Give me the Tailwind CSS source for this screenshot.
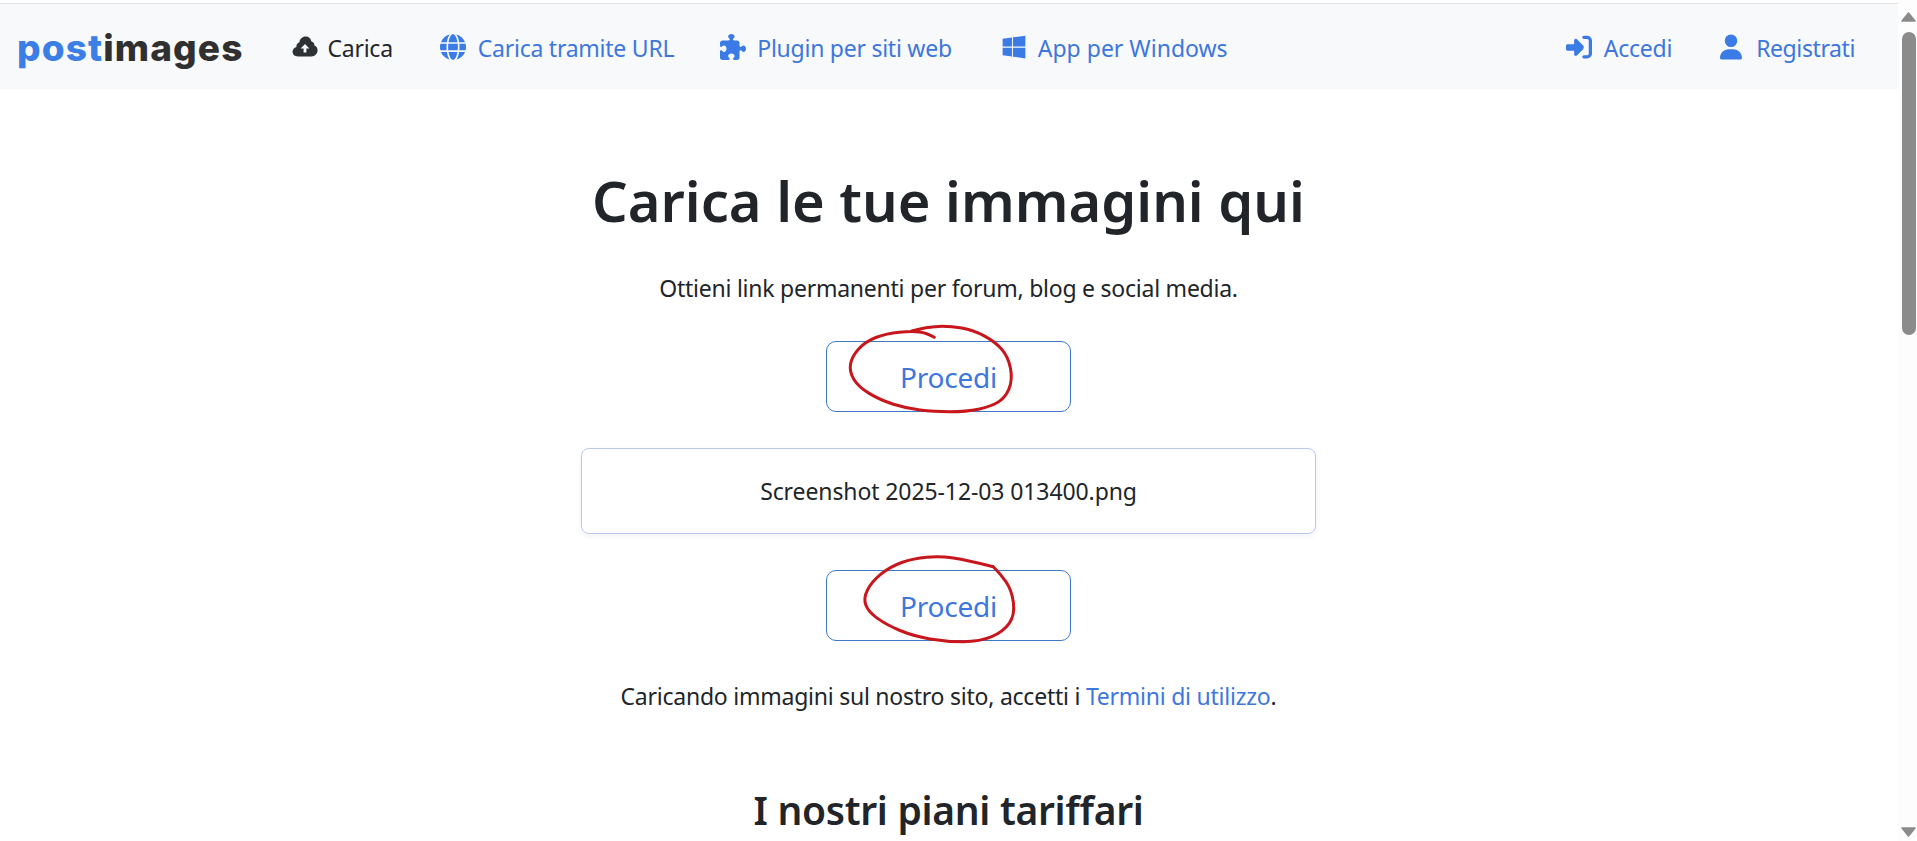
<!DOCTYPE html>
<html lang="it">
<head>
<meta charset="utf-8">
<title>postimages</title>
<script src="https://cdn.jsdelivr.net/npm/@tailwindcss/browser@4"></script>
</head>
<body class="h-[841px] overflow-hidden bg-white font-['Noto_Sans','Open_Sans',sans-serif] text-[#212529]">
<div class="relative flex h-[841px] w-[1917px]">
  <div class="flex w-[1898px] flex-col">
    <div class="h-[4px] border-b border-[#e2e3e4] bg-white"></div>
    <nav class="flex h-[85px] items-center bg-[#f8f9fa] pr-[43px] pl-[17px] text-[23px] tracking-[-0.25px] text-[#3d77dd]">
      <a class="mr-[48px] pt-[1px] font-['Inter',sans-serif] text-[37px] leading-none font-extrabold tracking-[1.1px]"><span class="text-[#3b7fe6]">post</span><span class="text-[#303030]">images</span></a>
      <div class="flex items-center">
        <a class="mr-[47px] flex items-center gap-[10px] text-[#23272b]">
          <svg class="h-[21px] w-[26px]" viewBox="0 0 24 21" preserveAspectRatio="none" fill="#2f3235"><path d="M5.500 20.500C2.500 20.500.500 18.400.500 15.800c0-2.300 1.500-4.200 3.500-4.800C3.900 8.500 5 6.800 6.800 6.200 7.200 3 9.500.500 12.500.500c2.700 0 4.900 2 5.300 4.700 1.900.600 3 2.300 2.900 4.300 1.900.800 2.900 2.500 2.900 4.800 0 3.300-2.300 6.200-5.600 6.200zM12 8l-4 4.500h2.700V16.500h2.600V12.500H16z" fill-rule="evenodd"/></svg>
          <span class="pt-[3px]">Carica</span>
        </a>
        <a class="mr-[46px] flex items-center gap-[12px]">
          <svg class="h-[26px] w-[26px]" viewBox="0 0 512 512" fill="#3b7be6"><path d="M352 256c0 22.200-1.200 43.600-3.300 64H163.300c-2.200-20.400-3.300-41.800-3.300-64s1.200-43.600 3.300-64H348.700c2.200 20.400 3.300 41.800 3.300 64zm28.800-64H503.900c5.300 20.500 8.100 41.900 8.100 64s-2.800 43.500-8.100 64H380.800c2.100-20.600 3.200-42 3.200-64s-1.100-43.400-3.200-64zm112.600-32H376.700c-10-63.900-29.800-117.400-55.300-151.600c78.300 20.700 142 77.500 171.900 151.600zm-149.100 0H167.700c6.100-36.400 15.500-68.600 27-94.700c10.500-23.600 22.200-40.700 33.500-51.500C239.400 3.200 248.700 0 256 0s16.600 3.200 27.800 13.800c11.300 10.800 23 27.900 33.500 51.500c11.600 26 20.900 58.200 27 94.700zm-209 0H18.600C48.600 85.900 112.200 29.100 190.600 8.400C165.100 42.600 145.300 96.100 135.300 160zM8.100 192H131.200c-2.100 20.600-3.200 42-3.200 64s1.100 43.400 3.200 64H8.100C2.800 299.500 0 278.100 0 256s2.800-43.500 8.100-64zM194.700 446.600c-11.600-26-20.900-58.200-27-94.600H344.300c-6.100 36.400-15.500 68.600-27 94.600c-10.500 23.600-22.200 40.700-33.500 51.500C272.600 508.800 263.300 512 256 512s-16.600-3.200-27.800-13.800c-11.300-10.800-23-27.900-33.500-51.500zM135.300 352c10 63.900 29.800 117.400 55.300 151.600C112.200 482.900 48.600 426.100 18.600 352H135.300zm358.100 0c-30 74.100-93.600 130.900-171.900 151.600c25.500-34.200 45.200-87.700 55.300-151.600H493.400z"/></svg>
          <span class="pt-[3px]">Carica tramite URL</span>
        </a>
        <a class="mr-[50px] flex items-center gap-[11px]">
          <svg class="h-[26px] w-[26px]" viewBox="0 0 512 512" fill="#3b7be6"><path d="M192 104.800c0-9.200-5.800-17.300-13.200-22.800C167.200 73.300 160 61.300 160 48c0-26.500 28.700-48 64-48s64 21.500 64 48c0 13.300-7.200 25.300-18.800 34c-7.400 5.500-13.200 13.600-13.200 22.800c0 12.800 10.400 23.200 23.200 23.200H336c26.500 0 48 21.500 48 48v56.800c0 12.800 10.400 23.200 23.200 23.200c9.200 0 17.300-5.800 22.800-13.200c8.700-11.600 20.700-18.800 34-18.800c26.500 0 48 28.700 48 64s-21.500 64-48 64c-13.300 0-25.300-7.200-34-18.800c-5.500-7.400-13.600-13.200-22.800-13.200c-12.800 0-23.200 10.400-23.200 23.200V464c0 26.500-21.500 48-48 48H279.200c-12.800 0-23.200-10.400-23.200-23.200c0-9.200 5.800-17.300 13.200-22.800c11.600-8.700 18.800-20.700 18.800-34c0-26.500-28.700-48-64-48s-64 21.500-64 48c0 13.300 7.200 25.300 18.800 34c7.400 5.500 13.200 13.600 13.200 22.800c0 12.800-10.400 23.200-23.200 23.200H48c-26.500 0-48-21.500-48-48V343.200C0 330.400 10.400 320 23.200 320c9.200 0 17.300 5.800 22.800 13.200C54.700 344.800 66.700 352 80 352c26.500 0 48-28.700 48-64s-21.500-64-48-64c-13.300 0-25.300 7.200-34 18.800C40.500 250.200 32.400 256 23.200 256C10.400 256 0 245.600 0 232.800V176c0-26.500 21.500-48 48-48H168.800c12.800 0 23.200-10.400 23.200-23.200z"/></svg>
          <span class="pt-[3px]">Plugin per siti web</span>
        </a>
        <a class="flex items-center gap-[12px]">
          <svg class="h-[26px] w-[24px]" viewBox="0 0 448 512" fill="#3b7be6"><path d="M0 93.700l183.600-25.300v177.400H0V93.700zm0 324.600l183.600 25.300V268.400H0v149.900zm203.800 28L448 480V268.400H203.800v177.900zm0-380.600v180.100H448V32L203.800 65.700z"/></svg>
          <span class="pt-[3px] tracking-[0px]">App per Windows</span>
        </a>
      </div>
      <div class="ml-auto flex items-center gap-[48px]">
        <a class="flex items-center gap-[12px]">
          <svg class="h-[26px] w-[26px]" viewBox="0 0 512 512" fill="#3b7be6"><path d="M352 96l64 0c17.700 0 32 14.300 32 32l0 256c0 17.700-14.300 32-32 32l-64 0c-17.700 0-32 14.300-32 32s14.300 32 32 32l64 0c53 0 96-43 96-96l0-256c0-53-43-96-96-96l-64 0c-17.700 0-32 14.300-32 32s14.300 32 32 32zm-9.400 182.600c12.500-12.500 12.500-32.800 0-45.300l-128-128c-9.200-9.200-22.900-11.900-34.900-6.900s-19.800 16.600-19.800 29.600l0 72-128 0c-17.700 0-32 14.300-32 32l0 64c0 17.700 14.300 32 32 32l128 0 0 72c0 12.900 7.800 24.600 19.800 29.600s25.700 2.200 34.900-6.900l128-128z"/></svg>
          <span class="pt-[3px]">Accedi</span>
        </a>
        <a class="flex items-center gap-[14px]">
          <svg class="h-[26px] w-[22px]" viewBox="0 0 448 512" fill="#3b7be6"><path d="M224 256A128 128 0 1 0 224 0a128 128 0 1 0 0 256zm-45.700 48C79.800 304 0 383.800 0 482.300C0 498.700 13.300 512 29.700 512H418.300c16.400 0 29.700-13.300 29.700-29.700C448 383.800 368.200 304 269.700 304H178.300z"/></svg>
          <span class="pt-[3px] tracking-[-0.4px]">Registrati</span>
        </a>
      </div>
    </nav>
    <main class="flex flex-col items-center pr-[1px]">
      <h1 class="mt-[76px] text-[56px] leading-[70px] font-semibold tracking-[0px]">Carica le tue immagini qui</h1>
      <p class="mt-[37px] text-[23px] leading-[32px] tracking-[-0.24px]">Ottieni link permanenti per forum, blog e social media.</p>
      <a class="mt-[37px] flex h-[71px] w-[245px] items-center justify-center rounded-[10px] border border-[#3d77c8] pt-[1px] text-[28px] tracking-[-0.2px] text-[#3d77dd]">Procedi</a>
      <div class="mt-[36px] flex h-[86px] w-[735px] items-center justify-center rounded-[8px] border border-[#bcc8ea] pt-[1px] text-[23px] tracking-[-0.1px] shadow-[0_2px_6px_rgba(0,0,0,0.06)]">Screenshot 2025-12-03 013400.png</div>
      <a class="mt-[36px] flex h-[71px] w-[245px] items-center justify-center rounded-[10px] border border-[#3d77c8] pt-[1px] text-[28px] tracking-[-0.2px] text-[#3d77dd]">Procedi</a>
      <p class="mt-[39px] text-[23px] leading-[32px] tracking-[-0.24px]">Caricando immagini sul nostro sito, accetti i <a class="text-[#3d77dd]">Termini di utilizzo</a>.</p>
      <h2 class="mt-[73px] text-[39px] leading-[50px] font-semibold tracking-[-0.3px]">I nostri piani tariffari</h2>
    </main>
  </div>
  <div class="flex w-[19px] flex-col items-center bg-[#fdfdfd] pt-[12px] pb-[4px] pl-[2px]">
    <svg class="h-[10px] w-[15px]" viewBox="0 0 15 10" fill="#8b8b8b" stroke="#8b8b8b" stroke-width="1.500" stroke-linejoin="round"><path d="M7.500 1 14 9H1z"/></svg>
    <div class="mt-[10px] h-[303px] w-[14px] rounded-full bg-[#8b8b8b]"></div>
    <svg class="mt-auto h-[10px] w-[15px]" viewBox="0 0 15 10" fill="#8b8b8b" stroke="#8b8b8b" stroke-width="1.500" stroke-linejoin="round"><path d="M7.500 9 14 1H1z"/></svg>
  </div>
  <svg class="pointer-events-none absolute top-0 left-0 h-[841px] w-[1917px]" viewBox="0 0 1917 841" fill="none" stroke="#c8161d" stroke-width="3" stroke-linecap="round">
    <path d="M934.300 337.300Q926.700 332.700 919.200 331.900Q911.700 331 899.200 332.200Q886.700 333.300 875.900 337.500Q865 341.700 858.400 349.200Q851.700 356.700 850.500 364.200Q849.300 371.700 853.800 379.200Q858.300 386.700 869.200 393.400Q880 400 893.400 404.200Q906.700 408.300 920 410Q933.300 411.700 950 411.700Q966.700 411.700 978.400 409.200Q990 406.700 997.500 402.500Q1005 398.300 1008.900 389.200Q1012.700 380 1010.500 368.400Q1008.300 356.700 1001.700 349.200Q995 341.700 984.200 335.900Q973.300 330 961.700 328Q950 326 938.400 326.400Q926.700 326.700 911.700 331"/>
    <path d="M993.300 566.700Q966.700 560 953.400 558Q940 556 926.700 557.200Q913.300 558.300 901.700 562.500Q890 566.700 880.900 574.200Q871.700 581.700 867.500 590Q863.300 598.300 865.800 605Q868.300 611.700 877.500 618.400Q886.700 625 900 630.500Q913.300 636 930 638.900Q946.700 641.700 963.400 641.700Q980 641.700 991.700 636.700Q1003.300 631.700 1009.200 623.400Q1015 615 1013.400 602.500Q1011.700 590 1005.900 581.700Q1000 573.300 993.300 566.700"/>
  </svg>
</div>
</body>
</html>
